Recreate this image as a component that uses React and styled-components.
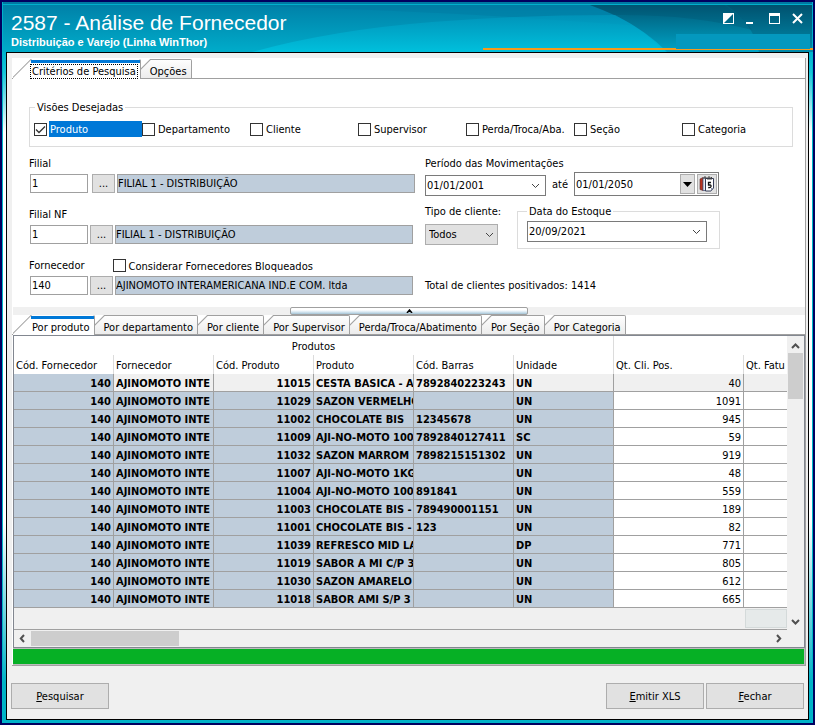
import React, { useState } from "react";
import styled, { createGlobalStyle } from "styled-components";

const GlobalStyle = createGlobalStyle`
  * {
    box-sizing: border-box;
  }
  body {
    margin: 0;
    font-family: "DejaVu Sans Condensed", "DejaVu Sans", sans-serif;
    font-size: 11px;
    line-height: 13px;
    color: #000000;
  }
  button, input, select {
    font: inherit;
    color: inherit;
    border-radius: 0;
    margin: 0;
  }
`;

const Window = styled.div`
  display: flex;
  flex-direction: column;
  min-height: 100vh;
  border: 2px solid #000060;
  padding: 0 4px 3px 3px;
  background: linear-gradient(
    #0087ae,
    #00b4d2 52px,
    #14c4da 70px,
    #ffffff 130px,
    #ffffff 520px,
    #00b2c8 680px
  );
  box-shadow: inset 1px 0 #00b8c8, inset -1px 0 #00b8c8;
`;
const TitleBar = styled.header`
  position: relative;
  display: flex;
  justify-content: space-between;
  height: 50px;
  margin: 0 -4px 0 -3px;
  padding: 9px 9px 0 9px;
  color: #ffffff;
`;
const Backdrop = styled.svg`
  position: absolute;
  inset: 0;
  width: 100%;
  height: 100%;
`;
const Titles = styled.div`
  position: relative;
  font-family: "Liberation Sans", Arial, sans-serif;
`;
const Title = styled.h1`
  margin: 0;
  font-size: 21px;
  line-height: 24px;
  font-weight: 400;
`;
const Subtitle = styled.div`
  font-size: 11px;
  line-height: 14px;
  font-weight: 700;
`;
const WindowControls = styled.div`
  position: relative;
  display: flex;
  align-items: flex-start;
  gap: 11px;
`;
const ControlButton = styled.button`
  display: flex;
  padding: 2px 0;
  border: 0;
  background: none;
`;

const Body = styled.main`
  flex: 1;
  border: 1px solid #000000;
  margin: 0 0 0 1px;
  padding: 5px 2px 10px 5px;
  background: #f0f0f0;
`;
const Page = styled.div`
  padding-top: 1px;
  background: #ffffff;
  border-right: 1px solid #a0a0a0;
  border-bottom: 1px solid #a0a0a0;
`;

const TabBar = styled.div`
  display: flex;
  height: 20px;
  padding-left: 1px;
  background: linear-gradient(#a0a0a0, #a0a0a0) 0 100% / 100% 1px no-repeat;
`;
const Tab = styled.button`
  height: 20px;
  white-space: nowrap;
  border: 0;
  border-right: 1px solid #a0a0a0;
  border-top-right-radius: 2px;
  padding: ${(props) => (props.$active ? "5px 3px 0 18px" : "5px 3px 0 8px")};
  background: ${(props) =>
    props.$active
      ? `linear-gradient(#0078d7, #0078d7) 18px 1px / 100% 3px no-repeat,
         linear-gradient(135deg, #ffffff 12px, #a0a0a0 13px, #ffffff 14px)`
      : `linear-gradient(#a0a0a0, #a0a0a0) 9px 0 / 100% 1px no-repeat,
         linear-gradient(#a0a0a0, #a0a0a0) 0 100% / 100% 1px no-repeat,
         linear-gradient(135deg, #ffffff 6px, #a0a0a0 7px, transparent 8px),
         linear-gradient(#ffffff, #ebebeb)`};
`;
const TabText = styled.span`
  display: block;
  padding: 0 1px;
  outline: ${(props) => (props.$focused ? "1px dotted #000000" : "none")};
`;

const Criteria = styled.section`
  padding: 22px 12px 12px 17px;
`;
const Group = styled.fieldset`
  min-width: 0;
  margin: 0;
  border: 1px solid #dcdcdc;
  padding: ${(props) => props.$padding};
`;
const Legend = styled.legend`
  margin-left: ${(props) => props.$indent || "0"};
  padding: 0 2px;
`;
const Views = styled.div`
  display: grid;
  grid-template-columns: repeat(7, 108px);
`;
const CheckLabel = styled.label`
  display: flex;
  align-items: center;
  gap: 2px;
`;
const CheckBox = styled.span`
  position: relative;
  display: flex;
  svg {
    position: absolute;
    inset: 0;
    pointer-events: none;
  }
`;
const CheckInput = styled.input`
  appearance: none;
  width: 13px;
  height: 13px;
  border: 1px solid #333333;
  background: #ffffff;
`;
const CheckText = styled.span`
  flex: ${(props) => (props.$selected ? 1 : "none")};
  white-space: nowrap;
  padding: 2px 1px 1px;
  color: ${(props) => (props.$selected ? "#ffffff" : "#000000")};
  background: ${(props) => (props.$selected ? "#0078d7" : "none")};
`;

const Filters = styled.div`
  display: grid;
  grid-template-columns: 386px 1fr;
  column-gap: 10px;
  margin-top: 10px;
`;
const FieldColumn = styled.div`
  display: flex;
  flex-direction: column;
  gap: 15px;
`;
const FieldLabel = styled.label`
  display: block;
  flex: none;
  white-space: nowrap;
`;
const FieldHead = styled.div`
  display: flex;
  gap: 28px;
  height: 13px;
  margin-bottom: 4px;
`;
const FieldRow = styled.div`
  display: flex;
  gap: 2px;
  padding-left: 1px;
`;
const CodeInput = styled.input`
  width: 58px;
  height: 19px;
  margin-right: ${(props) => (props.$wide ? "2px" : "0")};
  border: 1px solid #a0a0a0;
  padding: 0 1px;
`;
const DotsButton = styled.button`
  width: 23px;
  height: 19px;
  border: 1px solid #adadad;
  padding: 0;
  background: #e1e1e1;
`;
const NameInput = styled.input`
  flex: 0 1 298px;
  min-width: 0;
  height: 19px;
  border: 1px solid #a0a0a0;
  padding: 0;
  background: #bfcddb;
`;

const PeriodRow = styled.div`
  display: flex;
  align-items: flex-end;
  gap: 6px;
  margin-top: 2px;
`;
const Until = styled.label`
  align-self: center;
  width: 16px;
`;
const Combo = styled.div`
  display: flex;
  align-items: center;
  width: ${(props) => props.$width};
  height: ${(props) => props.$height || "21px"};
  border: 1px solid #7a7a7a;
  padding-right: 1px;
  background: #ffffff;
`;
const ComboInput = styled.input`
  flex: 1;
  min-width: 0;
  height: 100%;
  border: 0;
  padding: 0 1px;
  background: none;
`;
const ArrowButton = styled.button`
  display: flex;
  align-items: center;
  justify-content: center;
  width: 17px;
  height: 19px;
  border: 0;
  padding: 0;
  background: none;
`;
const RaisedButton = styled(ArrowButton)`
  width: ${(props) => props.$width};
  height: 20px;
  margin-left: 2px;
  border: 1px solid #adadad;
  background: #e1e1e1;
`;
const StockRow = styled.div`
  display: grid;
  grid-template-columns: 73px 203px;
  column-gap: 19px;
  align-items: start;
  margin-top: 9px;
`;
const SelectBox = styled.div`
  position: relative;
  margin-top: 6px;
  svg {
    position: absolute;
    top: 8px;
    right: 4px;
    pointer-events: none;
  }
`;
const Select = styled.select`
  display: block;
  appearance: none;
  width: 100%;
  height: 21px;
  border: 1px solid #adadad;
  padding: 0 3px;
  background: #e1e1e1;
`;
const Total = styled.div`
  margin-top: 30px;
`;

const Splitter = styled.div`
  display: flex;
  justify-content: center;
  height: 8px;
  margin-left: 1px;
  background: #f0f0f0;
`;
const SplitterHandle = styled.button`
  display: flex;
  justify-content: center;
  width: 238px;
  height: 8px;
  border: 1px solid #a0a0a0;
  border-radius: 2px;
  padding: 1px 0 0;
  background: linear-gradient(#ffffff 2px, #d6e6f0 4px, #a4c4d6 6px);
`;

const Grid = styled.div`
  margin-left: 1px;
  border: 1px solid #828790;
`;
const GridMain = styled.div`
  display: flex;
`;
const GridClip = styled.div`
  flex: 1;
  min-width: 0;
  overflow: hidden;
`;
const Table = styled.table`
  width: 830px;
  table-layout: fixed;
  border-collapse: separate;
  border-spacing: 0;
  background: #ffffff;
`;
const HeadCell = styled.th`
  height: 19px;
  padding: 2px 2px 0;
  font-weight: 400;
  text-align: ${(props) => (props.$center ? "center" : "left")};
  white-space: nowrap;
  border-right: 1px solid #dcdcdc;
`;
const Cell = styled.td`
  height: 18px;
  padding: ${(props) => (props.$right ? "2px 2px 0" : "2px 0 0 2px")};
  text-align: ${(props) => (props.$right ? "right" : "left")};
  font-weight: ${(props) => (props.$bold ? 700 : 400)};
  border-right: 1px solid #a0a0a0;
  border-bottom: 1px solid #a0a0a0;
  background: ${(props) => props.$color};
`;
const CellText = styled.div`
  overflow: hidden;
  white-space: pre;
`;
const Summary = styled.div`
  height: 22px;
  padding: 1px 0 1px 731px;
  border-bottom: 1px solid #a0a0a0;
  background: #f0f0f0;
`;
const SummaryCell = styled.div`
  height: 19px;
  border: 1px solid #d4dada;
  background: #e6eaea;
`;
const VerticalScroll = styled.div`
  display: flex;
  flex-direction: column;
  align-items: center;
  width: 17px;
  padding: 7px 1px 5px;
  background: #f0f0f0;
`;
const VerticalThumb = styled.div`
  width: 15px;
  height: 46px;
  margin: 4px 0 auto;
  background: #cdcdcd;
`;
const HorizontalScroll = styled.div`
  display: flex;
  align-items: center;
  height: 17px;
  padding: 0 22px 0 5px;
  background: #f0f0f0;
`;
const HorizontalThumb = styled.div`
  width: 148px;
  height: 15px;
  margin: 0 auto 0 5px;
  background: #cdcdcd;
`;
const Progress = styled.div`
  height: 17px;
  margin-left: 1px;
  border: 1px solid #bcbcbc;
  border-left: 0;
  background: #06b025;
`;

const Footer = styled.footer`
  display: flex;
  gap: 2px;
  margin: 17px 2px 0 -1px;
`;
const ActionButton = styled.button`
  width: 98px;
  height: 26px;
  margin-right: ${(props) => (props.$push ? "auto" : "0")};
  border: 1px solid #adadad;
  padding: 0;
  background: #e1e1e1;
`;

const views = [
  "Produto",
  "Departamento",
  "Cliente",
  "Supervisor",
  "Perda/Troca/Aba.",
  "Seção",
  "Categoria",
];

const resultTabs = [
  "Por produto",
  "Por departamento",
  "Por cliente",
  "Por Supervisor",
  "Perda/Troca/Abatimento",
  "Por Seção",
  "Por Categoria",
];

const columns = [
  { name: "Cód. Fornecedor", width: 100 },
  { name: "Fornecedor", width: 100 },
  { name: "Cód. Produto", width: 100 },
  { name: "Produto", width: 100 },
  { name: "Cód. Barras", width: 100 },
  { name: "Unidade", width: 100 },
  { name: "Qt. Cli. Pos.", width: 130 },
  { name: "Qt. Fatu", width: 100 },
];

const rows = [
  ["11015", "CESTA BASICA - A", "7892840223243", "UN", 40],
  ["11029", "SAZON VERMELHO", "", "UN", 1091],
  ["11002", "CHOCOLATE BIS", "12345678", "UN", 945],
  ["11009", "AJI-NO-MOTO 100", "7892840127411", "SC", 59],
  ["11032", "SAZON MARROM", "7898215151302", "UN", 919],
  ["11007", "AJI-NO-MOTO 1KG", "", "UN", 48],
  ["11004", "AJI-NO-MOTO 100", "891841", "UN", 559],
  ["11003", "CHOCOLATE BIS -", "789490001151", "UN", 189],
  ["11001", "CHOCOLATE BIS -", "123", "UN", 82],
  ["11039", "REFRESCO MID LA", "", "DP", 771],
  ["11019", "SABOR A MI C/P 3", "", "UN", 805],
  ["11030", "SAZON AMARELO", "", "UN", 612],
  ["11018", "SABOR AMI S/P 3", "", "UN", 665],
];

const paths = {
  up: "M1 5 L4.5 1.5 L8 5",
  down: "M1 1 L4.5 4.5 L8 1",
};

const Chevron = ({ direction = "down", thick }) => (
  <svg width="9" height="6" viewBox="0 0 9 6" fill="none">
    <path
      d={paths[direction]}
      stroke={thick ? "#505050" : "#444444"}
      strokeWidth={thick ? 2 : 1}
    />
  </svg>
);

const SideArrow = ({ left }) => (
  <svg width="7" height="9" viewBox="0 0 7 9" fill="none">
    <path
      d={left ? "M5 1 L1.8 4.5 L5 8" : "M2 1 L5.2 4.5 L2 8"}
      stroke="#505050"
      strokeWidth="2"
    />
  </svg>
);

const CalendarIcon = () => (
  <svg width="16" height="16" viewBox="0 0 16 16">
    <path d="M1 3 L4 1.5 V14.5 L1 13.5 Z" fill="#b8321e" stroke="#5a2a2a" strokeWidth="0.6" />
    <path d="M4 2 H7 V14.5 H4 Z" fill="#e8ecf4" stroke="#4a5578" strokeWidth="0.8" />
    <path d="M6.5 2.5 H14.5 V12 L12 15 H6.5 Z" fill="#ffffff" stroke="#333a55" />
    <path d="M12 15 V12 H14.5 Z" fill="#8890a8" />
    <path d="M5 3 V1 H7 V3 M9 4 V1 H11 V4 M12.5 3.5 V1" stroke="#444444" fill="none" />
    <path d="M12 6.5 H9.5 V9 H11 Q12.3 9.2 12 10.5 Q11.5 12 9.2 11.5" stroke="#111111" strokeWidth="1.3" fill="none" />
  </svg>
);

const TitleBackdrop = () => (
  <Backdrop viewBox="0 0 811 50" preserveAspectRatio="none">
    <defs>
      <linearGradient id="base" x1="0" y1="0" x2="0" y2="1">
        <stop offset="0" stopColor="#007ea6" />
        <stop offset="1" stopColor="#00acca" />
      </linearGradient>
      <linearGradient id="wave" x1="0" y1="0" x2="0" y2="1">
        <stop offset="0" stopColor="#0098be" />
        <stop offset="1" stopColor="#00c8e4" />
      </linearGradient>
      <linearGradient id="dark" x1="0" y1="0" x2="0" y2="1">
        <stop offset="0" stopColor="#005876" />
        <stop offset="1" stopColor="#00a4c6" />
      </linearGradient>
    </defs>
    <rect width="811" height="50" fill="url(#base)" />
    <path d="M200 3 H590 L640 24 Q400 6 200 3 Z" fill="#0078a0" opacity="0.4" />
    <path d="M588 3 H811 V50 H662 Q640 22 588 3 Z" fill="url(#dark)" />
    <path d="M613 13 Q646 30 665 50 H250 Q330 28 430 20 Q520 13 613 13 Z" fill="url(#wave)" opacity="0.7" />
    <path d="M725 3 Q745 18 753 36 L757 50 H811 V3 Z" fill="#003f5c" opacity="0.25" />
    <path d="M588 3 H722 Q740 14 750 28 Q690 12 613 13 Z" fill="#004a68" opacity="0.25" />
    <rect width="811" height="2" fill="#0078a2" />
    <rect y="2" width="811" height="1" fill="#00b0cc" />
    <rect x="481" y="46" width="330" height="2" fill="#f59a1c" />
    <rect x="674" y="32" width="134" height="15" fill="#0498be" />
    <rect width="1" height="50" fill="#00b0cc" />
    <rect x="810" width="1" height="46" fill="#00b0cc" />
  </Backdrop>
);

const controls = [
  {
    name: "Recolher",
    icon: <rect x="0.5" y="0.5" width="10" height="10" fill="none" stroke="#ffffff" />,
    fill: <path d="M0 0 H11 L0 11 Z" fill="#ffffff" />,
  },
  { name: "Minimizar", icon: <path d="M0 10 H7" stroke="#ffffff" strokeWidth="2" /> },
  {
    name: "Maximizar",
    icon: <rect x="0.5" y="0.5" width="10" height="10" fill="none" stroke="#ffffff" />,
    fill: <rect width="11" height="3" fill="#ffffff" />,
  },
  {
    name: "Fechar janela",
    icon: <path d="M1 1 L10 10 M10 1 L1 10" stroke="#ffffff" strokeWidth="2" />,
  },
];

const Check = ({ label, selected }) => {
  const [checked, setChecked] = useState(Boolean(selected));
  return (
    <CheckLabel>
      <CheckBox>
        <CheckInput
          type="checkbox"
          checked={checked}
          onChange={() => setChecked(!checked)}
        />
        {checked && (
          <svg width="13" height="13" viewBox="0 0 13 13">
            <path d="M2 6.5 L5 9.5 L11 3.5" fill="none" stroke="#333333" strokeWidth="1.3" />
          </svg>
        )}
      </CheckBox>
      <CheckText $selected={selected}>{label}</CheckText>
    </CheckLabel>
  );
};

const CodeField = ({ id, label, code, name, wide, extra }) => (
  <div>
    <FieldHead>
      <FieldLabel htmlFor={id}>{label}</FieldLabel>
      {extra}
    </FieldHead>
    <FieldRow>
      <CodeInput id={id} defaultValue={code} $wide={wide} />
      <DotsButton type="button" aria-label={`Buscar ${label}`}>...</DotsButton>
      <NameInput readOnly value={name} aria-label={`Nome ${label}`} />
    </FieldRow>
  </div>
);

const DateCombo = ({ id, value, width }) => (
  <Combo $width={width}>
    <ComboInput id={id} defaultValue={value} aria-label="Data" />
    <ArrowButton type="button" aria-label="Abrir calendário">
      <Chevron />
    </ArrowButton>
  </Combo>
);

const cellColor = (rowIndex, columnIndex) => {
  if (rowIndex === 0 && columnIndex > 0) return "#f0f0f0";
  return columnIndex < 6 ? "#bfcddb" : "#ffffff";
};

const Results = () => (
  <Table>
    <colgroup>
      {columns.map((column) => (
        <col key={column.name} width={column.width} />
      ))}
    </colgroup>
    <thead>
      <tr>
        <HeadCell colSpan={6} $center>Produtos</HeadCell>
        <HeadCell colSpan={2} />
      </tr>
      <tr>
        {columns.map((column) => (
          <HeadCell key={column.name}>{column.name}</HeadCell>
        ))}
      </tr>
    </thead>
    <tbody>
      {rows.map((row, rowIndex) => (
        <tr key={row[0]}>
          {["140", "AJINOMOTO INTE", ...row, ""].map((value, index) => (
            <Cell
              key={columns[index].name}
              $color={cellColor(rowIndex, index)}
              $bold={index < 6}
              $right={index === 0 || index === 2 || index > 5}
            >
              <CellText>{value}</CellText>
            </Cell>
          ))}
        </tr>
      ))}
    </tbody>
  </Table>
);

export default function App() {
  const [activeTab, setActiveTab] = useState("Por produto");
  return (
    <>
      <GlobalStyle />
      <Window>
        <TitleBar>
          <TitleBackdrop />
          <Titles>
            <Title>2587 - Análise de Fornecedor</Title>
            <Subtitle>Distribuição e Varejo (Linha WinThor)</Subtitle>
          </Titles>
          <WindowControls>
            {controls.map((control) => (
              <ControlButton key={control.name} type="button" aria-label={control.name}>
                <svg width="12" height="12" viewBox="0 0 12 12">
                  {control.fill}
                  {control.icon}
                </svg>
              </ControlButton>
            ))}
          </WindowControls>
        </TitleBar>
        <Body>
          <Page>
            <TabBar>
              <Tab type="button" $active>
                <TabText $focused>Critérios de Pesquisa</TabText>
              </Tab>
              <Tab type="button">
                <TabText>Opções</TabText>
              </Tab>
            </TabBar>
            <Criteria>
              <Group $padding="7px 4px 9px">
                <Legend $indent="1px">Visões Desejadas</Legend>
                <Views>
                  {views.map((view, index) => (
                    <Check key={view} label={view} selected={index === 0} />
                  ))}
                </Views>
              </Group>
              <Filters>
                <FieldColumn>
                  <CodeField id="filial" label="Filial" code="1" name="FILIAL 1 - DISTRIBUIÇÃO" wide />
                  <CodeField id="filialNf" label="Filial NF" code="1" name="FILIAL 1 - DISTRIBUIÇÃO" />
                  <CodeField
                    id="fornecedor"
                    label="Fornecedor"
                    code="140"
                    name="AJINOMOTO INTERAMERICANA IND.E COM. ltda"
                    extra={<Check label="Considerar Fornecedores Bloqueados" />}
                  />
                </FieldColumn>
                <div>
                  <FieldLabel htmlFor="inicio">Período das Movimentações</FieldLabel>
                  <PeriodRow>
                    <DateCombo id="inicio" value="01/01/2001" width="121px" />
                    <Until htmlFor="fim">até</Until>
                    <Combo $width="145px" $height="24px">
                      <ComboInput id="fim" defaultValue="01/01/2050" />
                      <RaisedButton type="button" $width="15px" aria-label="Abrir lista">
                        <svg width="9" height="5" viewBox="0 0 9 5">
                          <path d="M0 0 H9 L4.5 5 Z" fill="#000000" />
                        </svg>
                      </RaisedButton>
                      <RaisedButton type="button" $width="20px" aria-label="Calendário">
                        <CalendarIcon />
                      </RaisedButton>
                    </Combo>
                  </PeriodRow>
                  <StockRow>
                    <div>
                      <FieldLabel htmlFor="tipo">Tipo de cliente:</FieldLabel>
                      <SelectBox>
                        <Select id="tipo">
                          <option>Todos</option>
                        </Select>
                        <Chevron />
                      </SelectBox>
                    </div>
                    <Group $padding="3px 9px 6px">
                      <Legend>Data do Estoque</Legend>
                      <DateCombo id="estoque" value="20/09/2021" width="180px" />
                    </Group>
                  </StockRow>
                  <Total>Total de clientes positivados: 1414</Total>
                </div>
              </Filters>
            </Criteria>
            <Splitter>
              <SplitterHandle type="button" aria-label="Recolher filtros">
                <svg width="7" height="4" viewBox="0 0 7 4">
                  <path d="M1 4 L3.5 1 L6 4" fill="none" stroke="#000000" strokeWidth="1.5" />
                </svg>
              </SplitterHandle>
            </Splitter>
            <TabBar>
              {resultTabs.map((tab) => (
                <Tab
                  key={tab}
                  type="button"
                  $active={tab === activeTab}
                  onClick={() => setActiveTab(tab)}
                >
                  <TabText>{tab}</TabText>
                </Tab>
              ))}
            </TabBar>
            <Grid>
              <GridMain>
                <GridClip>
                  <Results />
                  <Summary>
                    <SummaryCell />
                  </Summary>
                </GridClip>
                <VerticalScroll>
                  <Chevron direction="up" thick />
                  <VerticalThumb />
                  <Chevron thick />
                </VerticalScroll>
              </GridMain>
              <HorizontalScroll>
                <SideArrow left />
                <HorizontalThumb />
                <SideArrow />
              </HorizontalScroll>
            </Grid>
            <Progress role="progressbar" aria-label="Progresso" aria-valuenow={100} />
          </Page>
          <Footer>
            <ActionButton type="button" $push>
              <u>P</u>esquisar
            </ActionButton>
            <ActionButton type="button">
              <u>E</u>mitir XLS
            </ActionButton>
            <ActionButton type="button">
              <u>F</u>echar
            </ActionButton>
          </Footer>
        </Body>
      </Window>
    </>
  );
}
